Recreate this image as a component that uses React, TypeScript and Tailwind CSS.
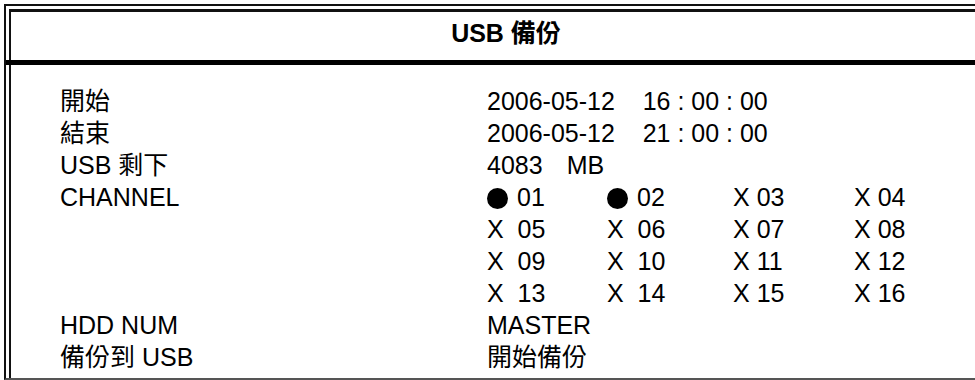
const channels = [
  ["dot", "01"], ["dot", "02"], ["X ", "03"], ["X ", "04"],
  ["X  ", "05"], ["X  ", "06"], ["X ", "07"], ["X ", "08"],
  ["X  ", "09"], ["X  ", "10"], ["X ", "11"], ["X ", "12"],
  ["X  ", "13"], ["X  ", "14"], ["X ", "15"], ["X ", "16"],
];

function ChannelCell({ mark, num }: { mark: string; num: string }) {
  if (mark === "dot") {
    return (
      <div className="flex items-center h-[32px]">
        <span className="inline-block w-[21px] h-[21px] rounded-full bg-black mt-[3px]"></span>
        <span className="ml-[9px]">{num}</span>
      </div>
    );
  }
  return (
    <div className="h-[32px] whitespace-pre">
      {mark}
      {num}
    </div>
  );
}

export default function App() {
  return (
    <div
      className="w-[975px] h-[380px] overflow-hidden bg-white text-black"
      style={{ fontFamily: '"Liberation Sans", "Noto Sans CJK TC", sans-serif' }}
    >
      <div className="ml-[4px] mt-[4px] w-[1004px] h-[376px] border-l-2 border-r-2 border-t-2 border-b-2 border-[#111] border-b-[#555] pl-[3px] pr-[3px] pt-[3px]">
        <div className="h-full border-l-2 border-r-2 border-t-[3px] border-[#111] flex flex-col">
          <div className="h-[53px] -ml-[5px] -mr-[5px] pb-[4px] border-b-[5px] border-black flex items-center justify-center text-[25px] font-bold">
            USB 備份
          </div>

          <div className="pt-[20px] pl-[49px] text-[25px] leading-[32px]">
            <div className="flex">
              <div className="w-[427px]">開始</div>
              <div className="whitespace-pre">2006-05-12    16 : 00 : 00</div>
            </div>
            <div className="flex">
              <div className="w-[427px]">結束</div>
              <div className="whitespace-pre">2006-05-12    21 : 00 : 00</div>
            </div>
            <div className="flex">
              <div className="w-[427px]">USB 剩下</div>
              <div>
                4083<span className="ml-[24px]">MB</span>
              </div>
            </div>
            <div className="flex">
              <div className="w-[427px]">CHANNEL</div>
              <div className="grid grid-cols-[120px_126px_121px_121px]">
                {channels.map(([mark, num]) => (
                  <ChannelCell key={num} mark={mark} num={num} />
                ))}
              </div>
            </div>
            <div className="flex">
              <div className="w-[427px]">HDD NUM</div>
              <div>MASTER</div>
            </div>
            <div className="flex">
              <div className="w-[427px]">備份到 USB</div>
              <div>開始備份</div>
            </div>
          </div>
        </div>
      </div>
    </div>
  );
}
